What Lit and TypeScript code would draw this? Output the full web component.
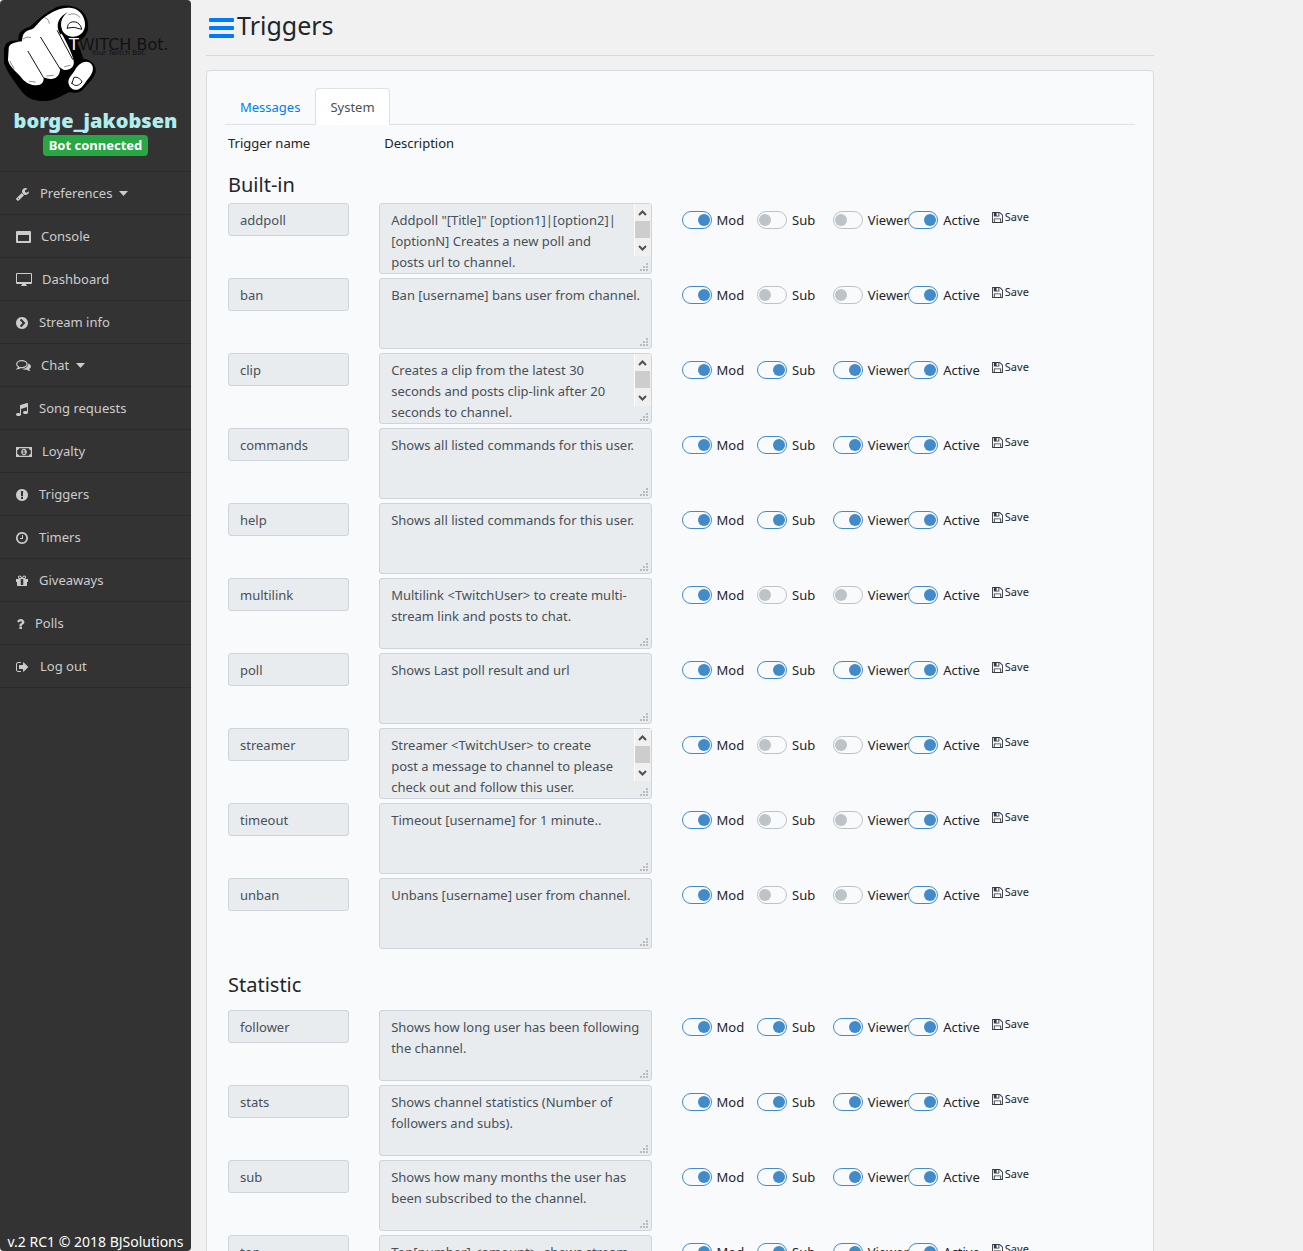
import { LitElement, html, css, svg, nothing } from "lit";
import { customElement, property } from "lit/decorators.js";

interface Trigger {
  name: string;
  text: string;
  sub: boolean;
  viewer: boolean;
  scroll?: boolean;
}

const on = (name: string, text: string, scroll = false): Trigger => ({ name, text, sub: true, viewer: true, scroll });
const modOnly = (name: string, text: string, scroll = false): Trigger => ({ name, text, sub: false, viewer: false, scroll });

const BUILT_IN: Trigger[] = [
  modOnly("addpoll", 'Addpoll "[Title]" [option1]|[option2]|[optionN] Creates a new poll and posts url to channel.', true),
  modOnly("ban", "Ban [username] bans user from channel."),
  on("clip", "Creates a clip from the latest 30 seconds and posts clip-link after 20 seconds to channel.", true),
  on("commands", "Shows all listed commands for this user."),
  on("help", "Shows all listed commands for this user."),
  modOnly("multilink", "Multilink <TwitchUser> to create multi-stream link and posts to chat."),
  on("poll", "Shows Last poll result and url"),
  modOnly("streamer", "Streamer <TwitchUser> to create post a message to channel to please check out and follow this user.", true),
  modOnly("timeout", "Timeout [username] for 1 minute.."),
  modOnly("unban", "Unbans [username] user from channel."),
];

const STATISTIC: Trigger[] = [
  on("follower", "Shows how long user has been following the channel."),
  on("stats", "Shows channel statistics (Number of followers and subs)."),
  on("sub", "Shows how many months the user has been subscribed to the channel."),
  on("top", "Top[number] <amount>, shows stream top list."),
];

/* Icons drawn on a 1792-unit grid are shown at 128 units per pixel. */
const glyph = (x: number, width: number, d: string) => html`<svg
  class="icon" aria-hidden="true" width=${width} height="14"
  viewBox="${x} 0 ${width * 128} 1792" fill="currentColor">${svg`<path d=${d} />`}</svg>`;

const small = (width: number, shapes: unknown) => html`<svg
  class="icon" aria-hidden="true" width=${width} height="14"
  viewBox="0 0 ${width} 14" fill="currentColor">${shapes}</svg>`;

const ICONS = {
  wrench: glyph(64, 14, "M448 1472q0-26-19-45t-45-19-45 19-19 45 19 45 45 19 45-19 19-45zm644-420l-682 682q-37 37-90 37-52 0-91-37l-106-108q-38-36-38-90 0-53 38-91l681-681q39 98 114.5 173.5t173.5 114.5zm634-435q0 39-23 106-47 134-164.500 217.500t-258.500 83.500q-185 0-316.500-131.500t-131.500-316.500 131.500-316.500 316.500-131.500q58 0 121.500 16.500t107.500 46.500q16 11 16 28t-16 28l-293 169v224l193 107q5-3 79-48.500t135.500-81 70.500-35.500q15 0 23.500 10t8.500 25z"),
  window: small(15, svg`<path fill-rule="evenodd" d="M1 1h13a1 1 0 0 1 1 1v10a1 1 0 0 1-1 1H1a1 1 0 0 1-1-1V2a1 1 0 0 1 1-1zM2 5v6h11V5z"/>`),
  desktop: small(16, svg`<path fill-rule="evenodd" d="M1 0h14a1 1 0 0 1 1 1v9a1 1 0 0 1-1 1h-5v1l1 .5v.5H5v-.5l1-.5v-1H1a1 1 0 0 1-1-1V1a1 1 0 0 1 1-1zM1 1v8h14V1z"/>`),
  chevron: glyph(128, 13, "M845 1395l454-454q19-19 19-45t-19-45l-454-454q-19-19-45-19t-45 19l-102 102q-19 19-19 45t19 45l307 307-307 307q-19 19-19 45t19 45l102 102q19 19 45 19t45-19zm819-499q0 209-103 385.500t-279.500 279.500-385.500 103-385.500-103-279.500-279.500-103-385.500 103-385.500 279.500-279.500 385.500-103 385.500 103 279.500 279.500 103 385.500z"),
  comments: small(15, svg`<path d="M5.800 1.700C3 1.700.7 3.200.7 5.200c0 1.200.8 2.100 2 2.800-.2.700-.7 1.200-1.200 1.700 1.200-.1 2.200-.6 3-1.200 4 .5 6.600-1.300 6.600-3.300 0-2-2.300-3.500-5.300-3.500z" fill="none" stroke="currentColor" stroke-width="1.200"/><path d="M12.200 4.500c1.700.6 2.700 1.700 2.700 3 0 1.100-.7 2-1.800 2.600.2.700.7 1.200 1.300 1.900-1.400 0-2.500-.6-3.300-1.300-2 .2-3.900-.1-5.200-1 3.500.1 6.500-1.500 6.300-5.200z"/>`),
  music: glyph(128, 13, "M1664 224v1120q0 50-34 89t-86 60.500-103.500 32-96.500 10.500-96.500-10.500-103.500-32-86-60.500-34-89 34-89 86-60.500 103.500-32 96.500-10.500q105 0 192 39v-537l-768 237v709q0 50-34 89t-86 60.500-103.500 32-96.500 10.500-96.500-10.500-103.500-32-86-60.500-34-89 34-89 86-60.500 103.500-32 96.500-10.500q105 0 192 39v-967q0-31 19-56.500t49-35.500l832-256q12-4 28-4 40 0 68 28t28 68z"),
  money: small(16, svg`<path fill-rule="evenodd" d="M0 2h16v10H0zM3 3.200c0 1-.8 1.800-1.800 1.800v4c1 0 1.800.8 1.800 1.800h10c0-1 .8-1.800 1.800-1.800V5c-1 0-1.800-.8-1.800-1.800z"/><path fill-rule="evenodd" d="M8 3.800c1.700 0 2.800 1.400 2.800 3.200S9.700 10.200 8 10.200 5.200 8.800 5.200 7 6.300 3.800 8 3.800zM7.700 5 6.600 5.800v.8l.8-.3v2h-.8v.8h2.700v-.8h-.8V5z"/>`),
  alert: glyph(128, 13, "M896 128q209 0 385.500 103t279.500 279.500 103 385.500-103 385.500-279.500 279.500-385.500 103-385.500-103-279.500-279.500-103-385.500 103-385.500 279.500-279.500 385.500-103zm128 1247v-190q0-14-9-23.500t-22-9.500h-192q-13 0-23 10t-10 23v190q0 13 10 23t23 10h192q13 0 22-9.500t9-23.500zm-2-344l18-621q0-12-10-18-10-8-24-8h-220q-14 0-24 8-10 6-10 18l17 621q0 10 10 17.500t24 7.500h185q14 0 23.500-7.500t10.500-17.500z"),
  clock: glyph(128, 13, "M1024 544v448q0 14-9 23t-23 9h-320q-14 0-23-9t-9-23v-64q0-14 9-23t23-9h224v-352q0-14 9-23t23-9h64q14 0 23 9t9 23zm416 352q0-148-73-273t-198-198-273-73-273 73-198 198-73 273 73 273 198 198 273 73 273-73 198-198 73-273zm224 0q0 209-103 385.500t-279.500 279.500-385.500 103-385.500-103-279.500-279.500-103-385.500 103-385.500 279.500-279.500 385.500-103 385.500 103 279.500 279.500 103 385.500z"),
  gift: glyph(128, 13, "M1056 1356v-716h-320v716q0 25 18 38.500t46 13.500h192q28 0 46-13.500t18-38.500zm-456-844h195l-126-161q-26-31-69-31-40 0-68 28t-28 68 28 68 68 28zm688-96q0-40-28-68t-68-28q-43 0-69 31l-125 161h194q40 0 68-28t28-68zm376 256v320q0 14-9 23t-23 9h-96v416q0 40-28 68t-68 28h-1088q-40 0-68-28t-28-68v-416h-96q-14 0-23-9t-9-23v-320q0-14 9-23t23-9h440q-93 0-158.500-65.500t-65.500-158.500 65.500-158.500 158.500-65.500q107 0 168 77l128 165 128-165q61-77 168-77 93 0 158.500 65.500t65.500 158.500-65.500 158.500-158.500 65.500h440q14 0 23 9t9 23z"),
  question: glyph(330, 9, "M1088 1256v240q0 16-12 28t-28 12h-240q-16 0-28-12t-12-28v-240q0-16 12-28t28-12h240q16 0 28 12t12 28zm316-600q0 54-15.500 101t-35 76.500-55 59.500-57.500 43.500-61 35.500q-41 23-68.500 65t-27.500 67q0 17-12 32.500t-28 15.500h-240q-15 0-25.500-18.500t-10.500-37.500v-45q0-83 65-156.500t143-108.500q59-27 84-56t25-76q0-42-46.500-74t-107.500-32q-65 0-108 29-35 25-107 115-13 16-31 16-12 0-25-8l-164-125q-13-10-15.500-25t5.500-28q160-266 464-266 80 0 161 31t146 83 106 127.500 41 158.500z"),
  signOut: glyph(64, 14, "M704 1440q0 4 1 20t.5 26.500-3 23.500-10 19.500-20.500 6.500h-320q-119 0-203.500-84.500t-84.500-203.500v-704q0-119 84.500-203.500t203.500-84.500h320q13 0 22.500 9.500t9.500 22.500q0 4 1 20t.5 26.500-3 23.500-10 19.500-20.500 6.500h-320q-66 0-113 47t-47 113v704q0 66 47 113t113 47h312l11.500 1 11.500 3 8 5.500 7 9 2 13.500zm928-544q0 26-19 45l-544 544q-19 19-45 19t-45-19-19-45v-288h-448q-26 0-45-19t-19-45v-384q0-26 19-45t45-19h448v-288q0-26 19-45t45-19 45 19l544 544q19 19 19 45z"),
};

const FLOPPY = "M512 1536h768v-384h-768v384zm896 0h128v-896q0-14-10-38.500t-20-34.500l-281-281q-10-10-34-20t-39-10v416q0 40-28 68t-68 28h-576q-40 0-68-28t-28-68v-416h-128v1280h128v-416q0-40 28-68t68-28h832q40 0 68 28t28 68v416zm-384-928v-320q0-13-9.500-22.500t-22.500-9.500h-192q-13 0-22.500 9.500t-9.500 22.500v320q0 13 9.500 22.500t22.500 9.500h192q13 0 22.500-9.500t9.500-22.500zm640 32v928q0 40-28 68t-68 28h-1344q-40 0-68-28t-28-68v-1344q0-40 28-68t68-28h928q40 0 88 20t76 48l280 280q28 28 48 76t20 88z";

const MENU = [
  { label: "Preferences", icon: ICONS.wrench, caret: true },
  { label: "Console", icon: ICONS.window },
  { label: "Dashboard", icon: ICONS.desktop },
  { label: "Stream info", icon: ICONS.chevron },
  { label: "Chat", icon: ICONS.comments, caret: true },
  { label: "Song requests", icon: ICONS.music },
  { label: "Loyalty", icon: ICONS.money },
  { label: "Triggers", icon: ICONS.alert },
  { label: "Timers", icon: ICONS.clock },
  { label: "Giveaways", icon: ICONS.gift },
  { label: "Polls", icon: ICONS.question },
  { label: "Log out", icon: ICONS.signOut },
];

@customElement("side-bar")
class SideBar extends LitElement {
  static styles = css`
    :host {
      display: flex;
      flex-direction: column;
      background: #333;
      border-radius: 4px;
      color: #ccc;
      font-size: 13px;
      line-height: 21px;
    }
    .logo { display: block; width: 100%; height: auto; }
    .user {
      margin: 0;
      text-align: center;
      font-size: 20px;
      line-height: 24px;
      font-weight: 900;
      color: #afeeee;
    }
    .status { text-align: center; margin: 2px 0 15px; display: flex; justify-content: center; }
    .badge {
      background: #28a745;
      color: #fff;
      font-weight: 700;
      padding: 0 6px;
      border-radius: 4px;
    }
    .menu { list-style: none; margin: 0; padding: 0; border-bottom: 1px solid #2a2a2a; }
    .item { border-top: 1px solid #2a2a2a; }
    .link {
      display: flex;
      align-items: center;
      gap: 10px;
      padding: 11px 16px 10px;
      color: inherit;
      text-decoration: none;
    }
    .icon { flex: none; }
    .caret { margin-left: -3px; }
    .foot { margin: auto 0 0; text-align: center; color: #fff; font-size: 14px; line-height: 18px; }
  `;

  render() {
    return html`
      <svg class="logo" viewBox="0 0 191 109" role="img" aria-label="TWITCH Bot. Your Twitch Bot.">
        <g transform="scale(0.3333)">
          <path fill="#000" d="M158 28C175 15 205 12 232 24C255 35 268 62 264 88C260 108 245 120 232 128C240 145 245 160 250 176C272 178 290 195 287 215C284 235 262 250 250 268C240 280 222 280 208 276C190 284 165 303 135 303C110 304 88 300 70 280C50 255 20 215 12 190L12 150C14 130 25 118 55 122C54 100 62 88 90 80C110 62 135 40 158 28Z"/>
          <path fill="#fff" d="M26 148C26 134 34 128 66 124C68 104 70 94 96 88C112 76 118 62 136 50C152 40 172 44 176 62C170 80 178 92 188 106C200 128 218 165 221 182C224 200 212 208 197 210C190 211 184 206 180 202C182 222 172 236 155 237C145 238 136 234 130 232C134 246 124 256 110 256C90 256 72 246 60 228C48 214 28 200 24 180Z"/>
          <path fill="#fff" d="M136 50C158 34 186 20 215 24C242 28 257 54 255 78C253 98 236 112 215 110C198 108 188 98 184 84L174 70Z"/>
          <path fill="#fff" d="M228 205C238 190 255 180 270 188C284 198 280 218 268 232C256 246 250 262 236 268C220 274 206 262 205 246C206 230 220 222 228 205Z"/>
          <path fill="#000" d="M182 104C168 84 168 54 204 36C186 50 178 66 187 94Z"/>
          <g fill="none" stroke="#111" stroke-width="3" stroke-linecap="round">
            <path d="M84 154 130 232M122 112 180 206M172 92 218 178"/>
            <path d="M202 84C202 66 220 62 232 68C240 73 244 80 245 88Q222 78 202 84ZM216 250 222 232C236 230 244 240 246 246C238 256 226 262 216 250Z"/>
          </g>
          <g fill="none" stroke="#555" stroke-width="2" stroke-linecap="round">
            <path d="M30 184 42 206M136 54Q146 56 148 70M70 116Q80 108 92 112M88 244 106 246M140 228 160 226M194 200 210 196M206 44Q226 36 240 52"/>
          </g>
        </g>
        <text x="69" y="50" font-family="DejaVu Sans, sans-serif" font-size="16" fill="#111"><tspan fill="#fff">T</tspan>WITCH Bot.</text>
        <text x="91" y="55" font-family="DejaVu Sans, sans-serif" font-size="7" fill="#111">Your Twitch Bot.</text>
      </svg>
      <h2 class="user">borge_jakobsen</h2>
      <div class="status"><span class="badge">Bot connected</span></div>
      <nav>
        <ul class="menu">
          ${MENU.map((m) => html`<li class="item"><a class="link" href="#">
            ${m.icon}<span>${m.label}</span>
            ${m.caret ? html`<svg class="caret" aria-hidden="true" width="9" height="5" viewBox="0 0 9 5" fill="currentColor"><path d="M0 0h9L4.500 5z"/></svg>` : nothing}
          </a></li>`)}
        </ul>
      </nav>
      <p class="foot">v.2 RC1 © 2018 BJSolutions</p>
    `;
  }
}

@customElement("trigger-row")
class TriggerRow extends LitElement {
  @property({ attribute: false }) item!: Trigger;

  static styles = css`
    :host {
      display: grid;
      grid-template-columns: repeat(12, minmax(0, 1fr));
      align-items: start;
    }
    .name-cell { grid-column: span 2; padding-right: 30px; }
    .text-cell { grid-column: span 4; padding-right: 30px; }
    .wrap { position: relative; }
    .field {
      display: block;
      box-sizing: border-box;
      width: 100%;
      margin: 0;
      border: 1px solid #ced4da;
      border-radius: 3px;
      background: #e8ecef;
      color: #495057;
      font: inherit;
      padding: 5px 11px;
    }
    .line { height: 33px; }
    .area { height: 71px; padding: 6px 8px 0 11px; resize: none; overflow: hidden; }
    .scrolls { padding-right: 34px; }
    .bar { position: absolute; top: 1px; right: 1px; }
    .grip { position: absolute; bottom: 3px; right: 4px; }
    .toggle {
      display: flex;
      align-items: flex-start;
      gap: 5px;
      margin-top: 7px;
      line-height: 21px;
      white-space: nowrap;
      color: #212529;
    }
    .switch {
      appearance: none;
      box-sizing: border-box;
      flex: none;
      display: flex;
      align-items: center;
      width: 30px;
      height: 18px;
      margin: 1px 0 0;
      padding: 0 1px;
      border: 1px solid #bdc3c7;
      border-radius: 9px;
    }
    .switch::before {
      content: "";
      width: 12px;
      height: 12px;
      border-radius: 50%;
      background: #bdc3c7;
    }
    .switch:checked { border-color: #428bca; justify-content: flex-end; }
    .switch:checked::before { background: #428bca; }
    .save {
      display: flex;
      align-items: center;
      gap: 2px;
      margin: 5px 0 0 8px;
      padding: 0;
      border: 0;
      background: none;
      font: inherit;
      font-size: 11px;
      line-height: 18px;
      color: #212529;
    }
  `;

  private toggle(label: string, checked: boolean) {
    return html`<label class="toggle"><input class="switch" type="checkbox" .checked=${checked} />${label}</label>`;
  }

  render() {
    const t = this.item;
    return html`
      <div class="name-cell"><input class="field line" readonly aria-label="Trigger name" .value=${t.name} /></div>
      <div class="text-cell">
        <div class="wrap">
          <textarea class="field area ${t.scroll ? "scrolls" : ""}" readonly aria-label="Description of ${t.name}" .value=${t.text}></textarea>
          ${t.scroll
            ? html`<svg class="bar" aria-hidden="true" width="17" height="52" viewBox="0 0 17 52">
                <path fill="#f0f0f0" d="M0 0h17v52H0z"/><path fill="#fff" d="M0 0h1v52H0z"/>
                <path fill="#cdcdcd" d="M1 17h15v17H1z"/>
                <path fill="none" stroke="#505050" stroke-width="2" d="M5 11l3.500-3.500L12 11M5 42l3.500 3.500L12 42"/>
              </svg>`
            : nothing}
          <svg class="grip" aria-hidden="true" width="8" height="8" viewBox="0 0 8 8" fill="#bbb">
            <path d="M6 0h2v2H6zM3 3h2v2H3zM6 3h2v2H6zM0 6h2v2H0zM3 6h2v2H3zM6 6h2v2H6z"/>
          </svg>
        </div>
      </div>
      ${this.toggle("Mod", true)}
      ${this.toggle("Sub", t.sub)}
      ${this.toggle("Viewer", t.viewer)}
      ${this.toggle("Active", true)}
      <button class="save" type="button">
        <svg aria-hidden="true" width="11" height="11" viewBox="128 128 1536 1536" fill="#343a40"><path d=${FLOPPY} /></svg>Save
      </button>
    `;
  }
}

@customElement("app-root")
class AppRoot extends LitElement {
  static styles = css`
    :host {
      display: flex;
      height: 100vh;
      background: #f1f1f1;
      color: #212529;
      font-family: "Noto Sans", "Open Sans", sans-serif;
      font-size: 13px;
      line-height: 21px;
    }
    .side { flex: none; width: 191px; }
    .main {
      flex: 1;
      min-width: 0;
      max-width: 978px;
      box-sizing: border-box;
      padding: 0 15px;
      overflow-y: auto;
      scrollbar-width: none;
    }
    .top {
      display: flex;
      align-items: center;
      gap: 3px;
      height: 56px;
      box-sizing: border-box;
      padding-left: 3px;
      border-bottom: 1px solid #d9d9d9;
    }
    .burger { display: flex; padding: 0; border: 0; background: none; color: #007bff; }
    .title { margin: 0; padding-bottom: 6px; font-size: 25px; line-height: 34px; font-weight: 400; }
    .card {
      margin-top: 14px;
      padding: 17px 18px;
      background: #f8fafc;
      border: 1px solid #dadbdc;
      border-radius: 4px;
    }
    .tabs { display: flex; border-bottom: 1px solid #dee2e6; }
    .tab {
      padding: 8px 14px 6px;
      border: 1px solid transparent;
      border-bottom: 0;
      border-radius: 4px 4px 0 0;
      color: #007bff;
      text-decoration: none;
    }
    .current {
      margin-bottom: -1px;
      padding-bottom: 7px;
      background: #fff;
      border-color: #dee2e6;
      color: #495057;
    }
    .body { padding-left: 3px; }
    .heads { display: grid; grid-template-columns: repeat(12, minmax(0, 1fr)); padding-top: 8px; }
    .head-name { grid-column: span 2; }
    .head-text { grid-column: span 4; padding-left: 5px; }
    .group { margin: 19px 0 6px; font-size: 20px; line-height: 24px; font-weight: 400; }
    .later { margin: 24px 0 13px; }
    .rows { display: grid; gap: 4px; }
  `;

  render() {
    return html`
      <side-bar class="side"></side-bar>
      <main class="main">
        <header class="top">
          <button class="burger" type="button" aria-label="Toggle menu">
            <svg width="25" height="20" viewBox="0 0 25 20" fill="currentColor" aria-hidden="true">
              <rect width="25" height="4" rx="1"/><rect y="8" width="25" height="4" rx="1"/><rect y="16" width="25" height="4" rx="1"/>
            </svg>
          </button>
          <h1 class="title">Triggers</h1>
        </header>
        <section class="card">
          <nav class="tabs">
            <a class="tab" href="#messages">Messages</a>
            <a class="tab current" href="#system" aria-current="page">System</a>
          </nav>
          <div class="body">
            <div class="heads"><span class="head-name">Trigger name</span><span class="head-text">Description</span></div>
            <h2 class="group">Built-in</h2>
            <div class="rows">${BUILT_IN.map((t) => html`<trigger-row .item=${t}></trigger-row>`)}</div>
            <h2 class="group later">Statistic</h2>
            <div class="rows">${STATISTIC.map((t) => html`<trigger-row .item=${t}></trigger-row>`)}</div>
          </div>
        </section>
      </main>
    `;
  }
}
